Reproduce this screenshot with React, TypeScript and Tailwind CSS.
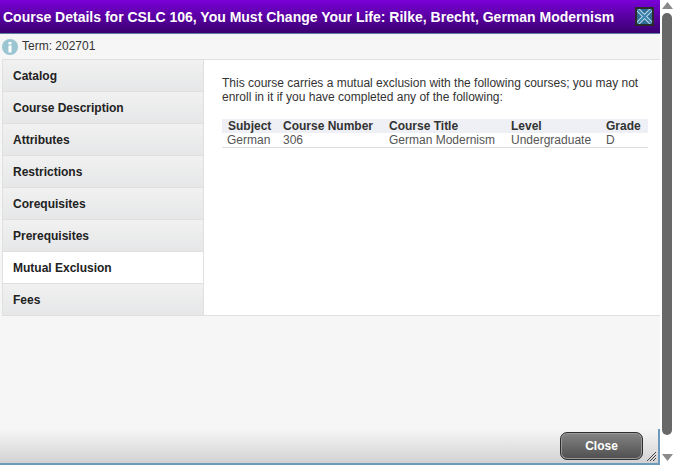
const tabs = ["Catalog", "Course Description", "Attributes", "Restrictions", "Corequisites", "Prerequisites", "Mutual Exclusion", "Fees"];

export default function App() {
  return (
    <div className="flex h-[465px] w-[676px] overflow-hidden bg-white font-['Liberation_Sans',Arial,sans-serif] text-[12px] text-[#333]">
      <div className="relative flex h-full w-[660px] flex-col">
        <div className="flex h-[34px] shrink-0 items-center justify-between border-b border-[#5d7fa3] bg-gradient-to-b from-[#7a00d8] to-[#3a0070] pl-[3px] pr-[6px]">
          <span className="text-[14px] font-bold leading-none text-white">Course Details for CSLC 106, You Must Change Your Life: Rilke, Brecht, German Modernism</span>
          <div className="flex h-[19px] w-[19px] items-center justify-center border-2 border-[#2b2b2b] bg-[#2f6f97]">
            <svg width="15" height="15" viewBox="0 0 15 15"><path d="M1 1 L14 14 M14 1 L1 14" stroke="#cfe3f0" strokeWidth="4" /><path d="M1 1 L14 14 M14 1 L1 14" stroke="#3f86b0" strokeWidth="2.4" /></svg>
          </div>
        </div>
        <div className="flex min-h-0 flex-1 flex-col bg-[#f6f6f6]">
          <div className="flex h-[25px] shrink-0 items-center pb-[2px] pl-[2px]">
            <svg width="16" height="16" viewBox="0 0 16 16" className="mr-[4px] mt-[3px]">
              <circle cx="8" cy="8" r="8" fill="#9cc5d2" />
              <rect x="6.5" y="3" width="3" height="2.5" fill="#fff" />
              <rect x="6.5" y="6.5" width="3" height="7" fill="#fff" />
            </svg>
            <span className="text-[12px] text-[#333]">Term: 202701</span>
          </div>
          <div className="ml-[2px] flex h-[257px] shrink-0 border-b border-[#e0e0e0] border-t border-t-[#e0e0e0] bg-white">
            <div className="flex w-[202px] shrink-0 flex-col border-l border-r border-[#e0e0e0]">
              {tabs.map((t) => {
                const on = t === "Mutual Exclusion";
                return (
                  <div key={t} className={`flex h-[32px] shrink-0 items-center border-b border-[#dfdfdf] pl-[10px] text-[12px] font-bold text-[#222] ${on ? "bg-white" : "bg-gradient-to-b from-[#f1f1f1] to-[#e6e7e8]"}`}>
                    {t}
                  </div>
                );
              })}
            </div>
            <div className="flex-1 pl-[18px] pr-[11px] pt-[16px]">
              <p className="text-[12px] leading-[14px] text-[#333]">
                This course carries a mutual exclusion with the following courses; you may not<br />enroll in it if you have completed any of the following:
              </p>
              <div className="mt-[15px] w-[426px] border-b border-[#dddddd]">
                <div className="grid h-[14px] grid-cols-[61px_106px_122px_95px_1fr] items-center bg-[#eef0f5] font-bold leading-[14px] text-[#333]">
                  <span className="pl-[6px]">Subject</span><span>Course Number</span><span>Course Title</span><span>Level</span><span>Grade</span>
                </div>
                <div className="grid h-[14px] grid-cols-[61px_106px_122px_95px_1fr] items-center leading-[14px] text-[#555]">
                  <span className="pl-[5px]">German</span><span>306</span><span>German Modernism</span><span>Undergraduate</span><span>D</span>
                </div>
              </div>
            </div>
          </div>
          <div className="flex-1" />
          <div className="flex h-[34px] shrink-0 items-start justify-end bg-gradient-to-b from-[#f6f6f6] to-[#d2d2d2] pr-[17px] pt-[3px]">
            <div className="flex h-[28px] w-[83px] items-center justify-center rounded-[7px] border border-[#2e2e2e] bg-gradient-to-b from-[#858585] to-[#4f4f4f] text-[12px] font-bold text-white shadow-[inset_0_0_0_1px_#9a9a9a]">Close</div>
          </div>
        </div>
        <div className="h-[2px] shrink-0 bg-[#6d9bbd]" />
        <div className="absolute bottom-0 right-[0px] h-[36px] w-[2px] bg-[#6d9bbd]" />
        <svg width="9" height="9" viewBox="0 0 9 9" className="absolute bottom-[4px] right-[4px]">
          <path d="M0 9 L9 0 M3 9 L9 3 M6 9 L9 6" stroke="#444" strokeWidth="1" />
        </svg>
      </div>
      <div className="flex w-[14px] shrink-0 flex-col items-center">
        <svg width="11" height="7" viewBox="0 0 11 7" className="mt-[2px]"><path d="M5.5 0 L11 7 H0 Z" fill="#8a8a8a" /></svg>
        <div className="mt-[4px] h-[422px] w-[10px] rounded-[5px] bg-[#686868]" />
        <svg width="11" height="7" viewBox="0 0 11 7" className="mt-[19px]"><path d="M5.5 7 L11 0 H0 Z" fill="#8a8a8a" /></svg>
      </div>
    </div>
  );
}
